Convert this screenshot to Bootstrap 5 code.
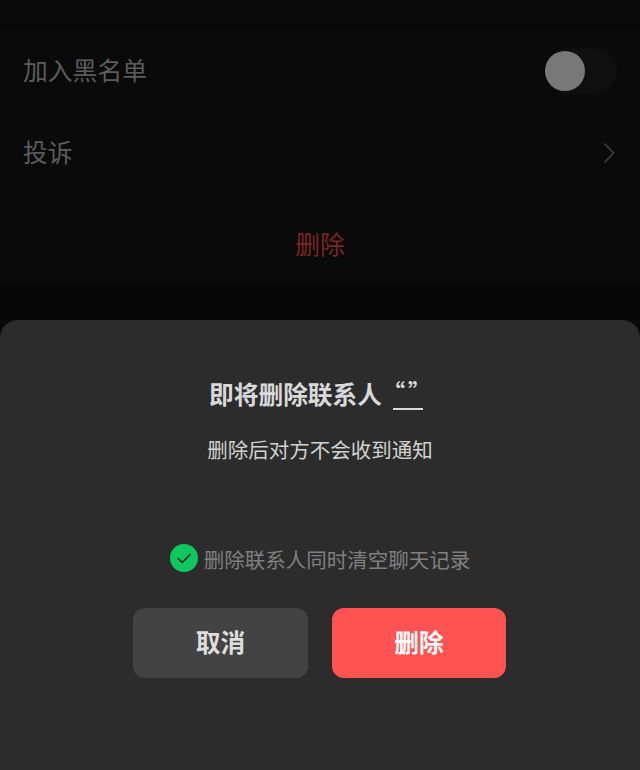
<!doctype html>
<html lang="zh-CN">
<head>
<meta charset="utf-8">
<title>删除联系人</title>
<link rel="stylesheet" href="https://cdn.jsdelivr.net/npm/bootstrap@5.3.0/dist/css/bootstrap.min.css">
<style>
html,body{height:100%;}
body{background:#0a0a0a;font-family:"Noto Sans CJK SC","Noto Sans",sans-serif;overflow:hidden;}
.screen{height:770px;}
.top-gap{height:30px;background:linear-gradient(#0a0a0a 0,#0a0a0a 18px,#080808 25px,#0a0a0a 30px);}
.row-item{height:82px;padding:0 25px 4px 23px;color:#5c5c5c;font-size:24.8px;line-height:1;}
.row-item svg{display:block;margin-top:4px;}
.switch-track{width:72px;height:46px;border-radius:23px;background:#0f0f0f;margin-top:4px;margin-right:-2px;}
.switch-knob{width:40px;height:40px;border-radius:50%;background:#787878;}
.danger-row{height:80px;margin-top:11px;padding-bottom:3px;background:#0a0a0a;color:#7c2525;font-size:24.8px;line-height:1;}
.bottom-gap{height:35px;background:#060606;}
.sheet{background:#2c2c2c;border-radius:18px 18px 0 0;padding-top:58px;}
.sheet-title{color:#d9d9d9;font-size:24.7px;font-weight:700;line-height:30px;height:32px;margin-right:8px;}
.quote-name{display:inline-block;width:30px;margin-left:11px;border-bottom:2px solid #d9d9d9;text-align:left;text-indent:-10px;font-size:22px;line-height:24px;height:32px;letter-spacing:3px;white-space:nowrap;}
.sheet-sub{color:#d2d2d2;font-size:20.5px;line-height:30px;margin-top:24px;}
.check-line{color:#808080;font-size:20.5px;height:30px;margin-top:79px;gap:6px;}
.check-line span{margin-top:1px;line-height:28px;}
.check-icon{width:28px;height:28px;display:block;}
.sheet-actions{gap:24px;margin-top:35px;margin-right:1px;}
.act-btn{width:175px;height:70px;border:0;border-radius:12px;font-size:24.7px;font-weight:700;padding:0 0 4px;line-height:1;}
.act-cancel{background:#434343;color:#dedede;}
.act-delete{background:#ff5252;color:#fff;width:174px;}
.act-cancel:hover,.act-cancel:active{background:#434343!important;color:#dedede!important;}
.act-delete:hover,.act-delete:active{background:#ff5252!important;color:#fff!important;}
</style>
</head>
<body>
<div class="screen d-flex flex-column">
  <div class="top-gap"></div>
  <div class="row-item d-flex align-items-center justify-content-between">
    <span>加入黑名单</span>
    <span class="switch-track d-flex align-items-center"><span class="switch-knob"></span></span>
  </div>
  <div class="row-item d-flex align-items-center justify-content-between">
    <span>投诉</span>
    <svg width="12" height="22" viewBox="0 0 12 22" fill="none" stroke="#3f3f3f" stroke-width="1.6"><path d="M1.5 1.5 10.5 11 1.5 20.5"/></svg>
  </div>
  <div class="danger-row d-flex align-items-center justify-content-center">删除</div>
  <div class="bottom-gap"></div>
  <div class="sheet flex-grow-1 d-flex flex-column align-items-center">
    <div class="sheet-title d-flex align-items-start"><span>即将删除联系人</span><span class="quote-name">“”</span></div>
    <div class="sheet-sub">删除后对方不会收到通知</div>
    <div class="check-line d-flex align-items-center">
      <svg class="check-icon" viewBox="0 0 28 28"><circle cx="14" cy="14" r="14" fill="#0fc75f"/><path d="M8 14.500 12.300 18.500 20 10.500" fill="none" stroke="#2c2c2c" stroke-width="1.700" stroke-linecap="round" stroke-linejoin="round"/></svg>
      <span>删除联系人同时清空聊天记录</span>
    </div>
    <div class="sheet-actions d-flex">
      <button type="button" class="btn act-btn act-cancel">取消</button>
      <button type="button" class="btn act-btn act-delete">删除</button>
    </div>
  </div>
</div>
<script src="https://cdn.jsdelivr.net/npm/bootstrap@5.3.0/dist/js/bootstrap.bundle.min.js"></script>
</body>
</html>
